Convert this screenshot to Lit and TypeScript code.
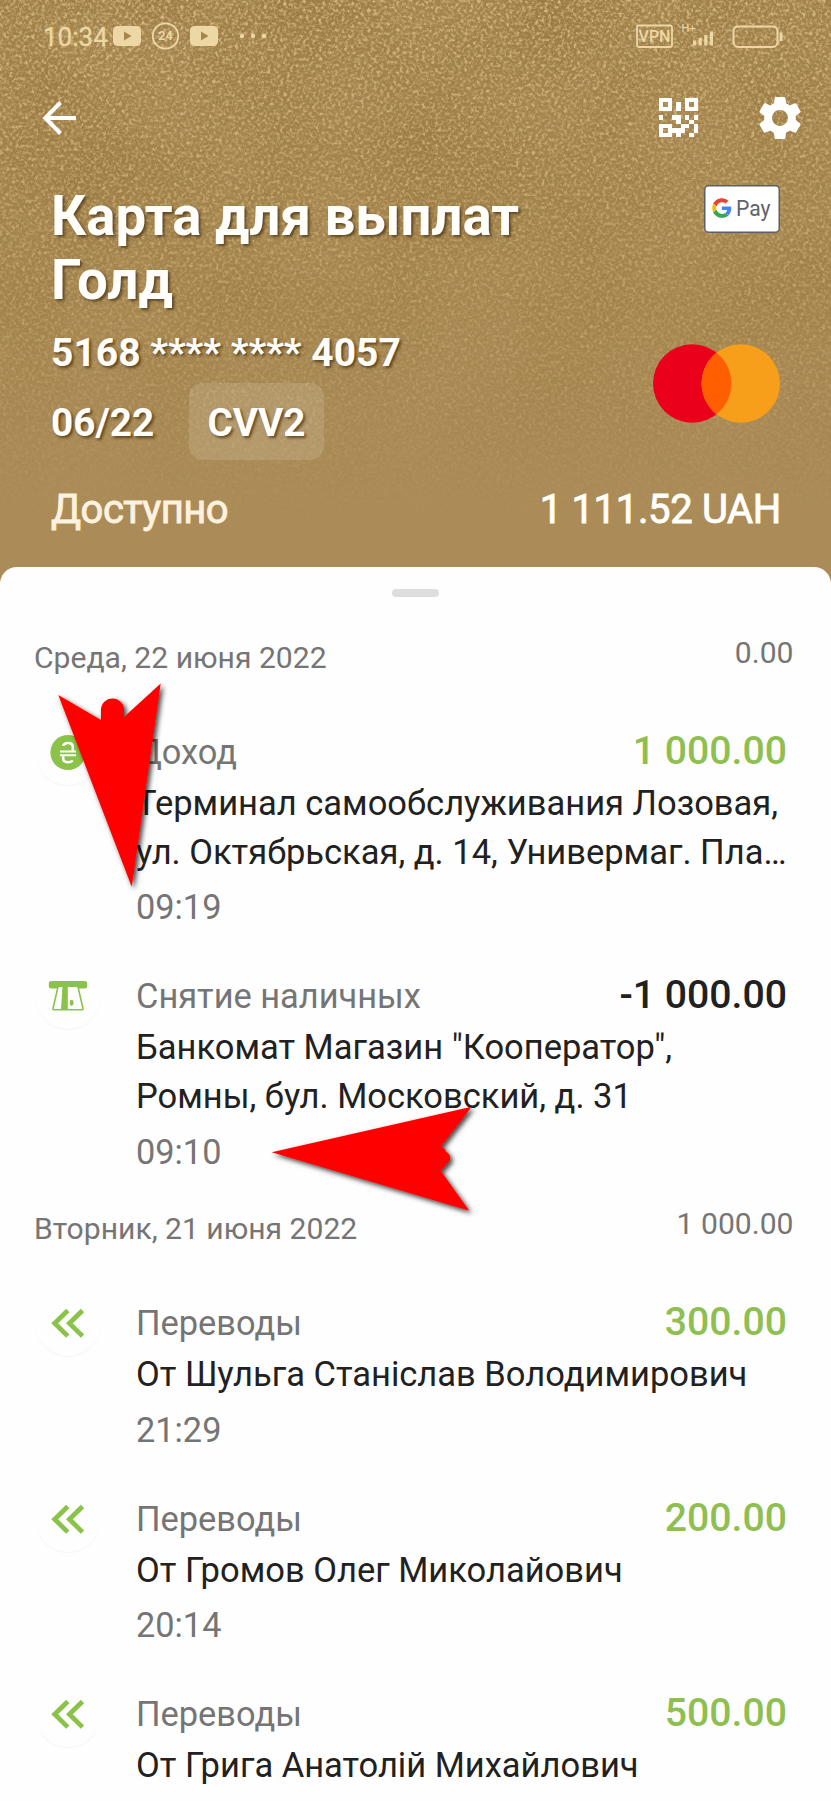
import { LitElement, html, css, svg } from "lit";
import { customElement, property } from "lit/decorators.js";

type Tx = { icon: string; title: string; amount: string; tone: string; lines: string[]; time?: string };
type Day = { date: string; sum: string; items: Tx[] };

const DAYS: Day[] = [
  {
    date: "Среда, 22 июня 2022",
    sum: "0.00",
    items: [
      { icon: "income", title: "Доход", amount: "1 000.00", tone: "plus", lines: ["Терминал самообслуживания Лозовая,", "ул. Октябрьская, д. 14, Универмаг. Пла…"], time: "09:19" },
      { icon: "cash", title: "Снятие наличных", amount: "-1 000.00", tone: "minus", lines: ['Банкомат Магазин "Кооператор",', "Ромны, бул. Московский, д. 31"], time: "09:10" },
    ],
  },
  {
    date: "Вторник, 21 июня 2022",
    sum: "1 000.00",
    items: [
      { icon: "transfer", title: "Переводы", amount: "300.00", tone: "plus", lines: ["От Шульга Станіслав Володимирович"], time: "21:29" },
      { icon: "transfer", title: "Переводы", amount: "200.00", tone: "plus", lines: ["От Громов Олег Миколайович"], time: "20:14" },
      { icon: "transfer", title: "Переводы", amount: "500.00", tone: "plus", lines: ["От Грига Анатолій Михайлович"] },
    ],
  },
];

const ICONS: Record<string, unknown> = {
  income: svg`
    <circle cx="32" cy="31.500" r="17.600" fill="#8bc34a"/>
    <g fill="none" stroke="#fff" stroke-width="2.500" transform="translate(0 1)">
      <path d="M27 23.800q1.200-2.800 5-2.800 4.800 0 4.800 4.200v4M27.200 33v3.300q0 3.900 4.600 3.900 3.700 0 5-1.700"/>
      <path d="M24 29.500h16M24 33.200h16" stroke-width="2"/>
    </g>`,
  cash: svg`
    <rect x="12.800" y="16" width="38.400" height="7.600" rx="2.500" fill="#8bc34a"/>
    <path d="M22.200 21h19.600L47 43.500q.3 1.200-1 1.200H18q-1.300 0-1-1.200z" fill="#fff" stroke="#8bc34a" stroke-width="1.600"/>
    <path d="M26.600 20h5.200v25H25z" fill="#8bc34a"/>
    <path d="M20 20h22v2H20z" fill="#8bc34a"/>
    <ellipse cx="35.600" cy="37.800" rx="1.900" ry="3" fill="#8bc34a"/>`,
  transfer: svg`<path d="M31.800 18.500 18.700 31.300l13.100 12.800M46.500 18.500 33.400 31.300l13.100 12.800" fill="none" stroke="#8bc34a" stroke-width="4.800"/>`,
};

@customElement("tx-row")
class TxRow extends LitElement {
  @property({ attribute: false }) tx!: Tx;
  static styles = css`
    :host { display: grid; grid-template-columns: 64px 1fr; column-gap: 36px; padding: 0 44px 0 36px; }
    .badge { width: 64px; height: 64px; margin-top: 2px; border-radius: 50%; background: #fefefe; box-shadow: 0 1.500px 1px rgba(0, 0, 0, 0.03); }
    .badge svg { display: block; }
    .head { display: flex; justify-content: space-between; align-items: baseline; height: 60px; line-height: 64px; white-space: nowrap; }
    .title { color: #757575; font-size: 34.400px; }
    .amount { font-size: 39.200px; font-weight: 500; }
    .plus { color: #8fbf50; }
    .minus { color: #212121; }
    .line { color: #212121; font-size: 34.500px; line-height: 48.700px; white-space: nowrap; }
    .time { color: #757575; font-size: 34.300px; line-height: 62px; height: 87px; }
  `;
  render() {
    const t = this.tx;
    return html`
      <div class="badge"><svg width="64" height="64" viewBox="0 0 64 64">${ICONS[t.icon]}</svg></div>
      <div>
        <div class="head"><span class="title">${t.title}</span><span class="amount ${t.tone}">${t.amount}</span></div>
        ${t.lines.map((l) => html`<div class="line">${l}</div>`)}
        ${t.time ? html`<div class="time">${t.time}</div>` : null}
      </div>`;
  }
}

const QR = [
  "111000111",
  "101010101",
  "111010111",
  "000000000",
  "100110101",
  "000010010",
  "111001101",
  "101111001",
  "111010010",
];

@customElement("app-root")
class AppRoot extends LitElement {
  static styles = css`
    :host { display: block; position: relative; width: 831px; height: 1801px; overflow: hidden; background: #ab8c58; font-family: Roboto, "Noto Sans", sans-serif; }
    .grain { position: absolute; left: 0; top: 0; }
    .hero { position: relative; height: 567px; color: #fffefa; box-sizing: border-box; }
    .status { display: flex; align-items: center; height: 72px; padding: 0 48px 0 43px; box-sizing: border-box; justify-content: space-between; color: #edd7a5; }
    .clock { display: flex; align-items: center; font-size: 26px; -webkit-text-stroke: 0.300px #edd7a5; }
    .clock span { width: 66.500px; padding-top: 2px; }
    .clock svg, .net svg { display: block; }
    .bar { display: flex; align-items: center; height: 91px; padding: 0 29px 0 42px; }
    .bar .back { margin-right: auto; }
    .bar .qr { margin-right: 60px; }
    .bar svg { display: block; }
    .card { display: flex; justify-content: space-between; padding: 21px 51px 0 51px; }
    .name { font-size: 54.600px; line-height: 64px; font-weight: 700; margin: 0; text-shadow: 2px 2px 3px rgba(60, 40, 10, 0.7); }
    .number { font-size: 39px; line-height: 46px; font-weight: 700; text-shadow: 2px 2px 3px rgba(60, 40, 10, 0.7); margin-top: 18px; }
    .row { display: flex; align-items: center; margin-top: 7px; font-size: 38.700px; font-weight: 700; text-shadow: 2px 2px 3px rgba(60, 40, 10, 0.7); }
    .row > span:first-child { width: 104px; padding-top: 2px; }
    .cvv { margin-left: 34px; width: 135px; height: 77px; line-height: 80px; text-align: center; background: rgba(255, 255, 255, 0.13); border-radius: 14px; }
    .right { display: flex; flex-direction: column; align-items: flex-end; padding-top: 1px; }
    .right svg { display: block; }
    .mc { margin-top: 111px; }
    .funds { display: flex; justify-content: space-between; padding: 26px 50px 0 51px; font-size: 40px; line-height: 48px; letter-spacing: -0.350px; -webkit-text-stroke: 0.900px currentColor; }
    .soft { color: #fdf1df; letter-spacing: -0.500px; }
    .sheet { position: relative; height: 1234px; background: #fefefe; border-radius: 17px 17px 0 0; overflow: hidden; }
    .handle { width: 47px; height: 8px; border-radius: 4px; background: #dedede; margin: 22px auto 0; }
    .day { display: flex; justify-content: space-between; align-items: flex-start; margin-top: -2px; padding: 0 37.500px 0 34px; color: #757575; font-size: 30.100px; line-height: 36px; height: 84px; }
    .date { padding-top: 5px; }
    .first { margin-top: 38px; }
    .marks { position: absolute; left: 0; top: 0; }
  `;

  grain() {
    return html`<svg class="grain" width="831" height="590" viewBox="0 0 831 590">
      <defs>
        <filter id="light" x="0" y="0" width="100%" height="100%" color-interpolation-filters="sRGB">
          <feTurbulence type="fractalNoise" baseFrequency="0.31" numOctaves="4" seed="21"/>
          <feColorMatrix values="0 0 0 0 0.86  0 0 0 0 0.74  0 0 0 0 0.53  1.9 1.9 0 0 -1.72"/>
        </filter>
        <filter id="dark" x="0" y="0" width="100%" height="100%" color-interpolation-filters="sRGB">
          <feTurbulence type="fractalNoise" baseFrequency="0.008" numOctaves="3" seed="3"/>
          <feColorMatrix values="0 0 0 0 0.5  0 0 0 0 0.38  0 0 0 0 0.14  1.4 0 0 0 -0.55"/>
        </filter>
        <linearGradient id="fade" x1="0" y1="0" x2="0" y2="1">
          <stop offset="0" stop-color="#eee"/><stop offset=".4" stop-color="#999"/>
          <stop offset=".65" stop-color="#555"/><stop offset=".9" stop-color="#000"/>
        </linearGradient>
        <linearGradient id="base" x1="0" y1="0" x2="0" y2="1">
          <stop offset="0" stop-color="#a3844e"/><stop offset=".5" stop-color="#a58650"/><stop offset=".85" stop-color="#ab8c58"/>
        </linearGradient>
        <mask id="m"><rect width="831" height="590" fill="url(#fade)"/></mask>
      </defs>
      <rect width="831" height="590" fill="url(#base)"/>
      <g mask="url(#m)">
        <rect width="831" height="590" filter="url(#dark)" opacity=".45"/>
        <rect width="831" height="590" filter="url(#light)"/>
      </g>
    </svg>`;
  }

  status() {
    const yt = (x: number) => svg`<rect x=${x} y="6" width="28" height="20" rx="4.500" fill="#edd7a5"/><path d="M${x + 11} 11.500v9l7.500-4.500z" fill="#a5864c"/>`;
    return html`<div class="status">
      <div class="clock"><span>10:34</span>
        <svg width="160" height="32" viewBox="0 0 160 32">
          ${yt(3)}${yt(80)}
          <circle cx="55.500" cy="16" r="12.700" fill="none" stroke="#edd7a5" stroke-width="1.800"/>
          <text x="55.500" y="20.200" font-size="12.500" font-weight="700" text-anchor="middle" fill="#edd7a5">24</text>
          <g fill="#edd7a5"><circle cx="132" cy="16" r="2.200"/><circle cx="143" cy="16" r="2.200"/><circle cx="154" cy="16" r="2.200"/></g>
        </svg></div>
      <div class="net">
        <svg width="147" height="32" viewBox="0 0 147 32" fill="#edd7a5">
          <rect x="1" y="5.500" width="35" height="21.500" rx="2" fill="none" stroke="#edd7a5" stroke-width="1.800"/>
          <text x="18.500" y="22" font-size="16" text-anchor="middle" font-weight="500">VPN</text>
          <text x="45.500" y="12" font-size="11">H+</text>
          <path d="M57 20.500h3.200v5H57zM62.600 18h3.200v7.500h-3.200zM68.200 15h3.200v10.500h-3.200zM73.800 11.500H77v14h-3.200z"/>
          <rect x="97.500" y="6.500" width="44" height="20.500" rx="5" fill="none" stroke="#edd7a5" stroke-width="2"/>
          <rect x="143.500" y="12.500" width="3" height="8.500"/>
        </svg></div>
    </div>`;
  }

  render() {
    const cell = 4.28;
    return html`
      ${this.grain()}
      <div class="hero">
        ${this.status()}
        <div class="bar">
          <svg class="back" width="36" height="36" viewBox="0 0 36 36"><path d="M34 18H4M18.500 2.500 3.200 18l15.300 15.500" fill="none" stroke="#fff" stroke-width="4"/></svg>
          <svg class="qr" width="39" height="39" viewBox="0 0 38.520 38.520" fill="#fff" shape-rendering="crispEdges">
            ${QR.flatMap((r, y) => [...r].map((c, x) => (c === "1" ? svg`<rect x=${x * cell} y=${y * cell} width=${cell} height=${cell}/>` : null)))}
          </svg>
          <svg width="44" height="44" viewBox="2 2 20 20" fill="#fff"><path d="M19.140 12.940c.04-.3.06-.61.06-.94 0-.32-.02-.64-.07-.94l2.030-1.580c.18-.14.23-.41.12-.61l-1.920-3.320c-.12-.22-.37-.29-.59-.22l-2.390.96c-.5-.38-1.030-.7-1.620-.94l-.36-2.540c-.04-.24-.24-.41-.48-.41h-3.840c-.24 0-.43.17-.47.41l-.36 2.540c-.59.24-1.130.57-1.620.94l-2.390-.96c-.22-.08-.47 0-.59.22L2.740 8.870c-.12.21-.08.47.12.61l2.030 1.580c-.05.3-.09.63-.09.94s.02.64.07.94l-2.030 1.580c-.18.14-.23.41-.12.61l1.920 3.320c.12.22.37.29.59.22l2.390-.96c.5.38 1.030.7 1.620.94l.36 2.540c.05.24.24.41.48.41h3.840c.24 0 .44-.17.47-.41l.36-2.540c.59-.24 1.130-.56 1.620-.94l2.390.96c.22.08.47 0 .59-.22l1.920-3.320c.12-.22.07-.47-.12-.61l-2.010-1.580zM12 15.600c-1.980 0-3.600-1.620-3.600-3.600s1.620-3.600 3.600-3.600 3.600 1.620 3.600 3.600-1.620 3.600-3.600 3.600z"/></svg>
        </div>
        <div class="card">
          <div>
            <h1 class="name">Карта для выплат<br>Голд</h1>
            <div class="number">5168 **** **** 4057</div>
            <div class="row"><span>06/22</span><span class="cvv">CVV2</span></div>
          </div>
          <div class="right">
            <svg width="76" height="48" viewBox="0 0 76 48">
              <rect x=".75" y=".75" width="74.500" height="46.500" rx="4" fill="#fff" stroke="#5b6066" stroke-width="1.500"/>
              <g transform="translate(8.200 13.300) scale(.405)">
                <path fill="#EA4335" d="M24 9.500c3.540 0 6.710 1.220 9.210 3.600l6.850-6.850C35.900 2.380 30.470 0 24 0 14.620 0 6.510 5.380 2.560 13.220l7.980 6.190C12.430 13.720 17.740 9.500 24 9.500z"/>
                <path fill="#4285F4" d="M46.980 24.550c0-1.570-.15-3.090-.38-4.550H24v9.020h12.940c-.58 2.960-2.260 5.480-4.780 7.180l7.730 6c4.510-4.180 7.090-10.360 7.090-17.650z"/>
                <path fill="#FBBC05" d="M10.530 28.590c-.48-1.450-.76-2.990-.76-4.590s.27-3.140.76-4.590l-7.980-6.190C.92 16.460 0 20.120 0 24c0 3.880.92 7.540 2.560 10.780z"/>
                <path fill="#34A853" d="M24 48c6.480 0 11.930-2.130 15.890-5.810l-7.730-6c-2.150 1.450-4.920 2.300-8.160 2.300-6.260 0-11.570-4.220-13.470-9.910l-7.980 6.190C6.510 42.620 14.620 48 24 48z"/>
              </g>
              <text x="32" y="31" font-size="22.500" fill="#5f6368" font-family="Roboto, sans-serif" textLength="34.500" lengthAdjust="spacingAndGlyphs">Pay</text>
            </svg>
            <svg class="mc" width="127" height="79" viewBox="0 0 127 79">
              <circle cx="39.200" cy="39.500" r="39.200" fill="#eb001b"/><circle cx="87.800" cy="39.500" r="39.200" fill="#f79e1b"/>
              <path d="M63.500 8.740a39.200 39.200 0 0 1 0 61.520 39.200 39.200 0 0 1 0-61.520z" fill="#ff5f00"/>
            </svg>
          </div>
        </div>
        <div class="funds"><span class="soft">Доступно</span><span>1 111.52 UAH</span></div>
      </div>
      <div class="sheet">
        <div class="handle"></div>
        ${DAYS.map((d, i) => html`
          <div class="day ${i === 0 ? "first" : ""}"><span class="date">${d.date}</span><span>${d.sum}</span></div>
          ${d.items.map((t) => html`<tx-row .tx=${t}></tx-row>`)}`)}
      </div>
      <svg class="marks" width="831" height="1801" viewBox="0 0 831 1801">
        <defs><filter id="drop" x="-20%" y="-20%" width="140%" height="140%"><feDropShadow dx="2.500" dy="2.500" stdDeviation="2.500" flood-color="#000" flood-opacity=".75"/></filter></defs>
        <g fill="#fe0000" filter="url(#drop)">
          <path d="M58.300 695 101 720v-10a11.500 11.500 0 0 1 23 0v7l36.700-33.500-29 203.200z"/>
          <path d="m271.700 1152.300 200-45.600-31 40q4 1 5.500 5.300 4 2 4 6t-4 6q-1.500 4-6 6l29.100 40.700z"/>
        </g>
      </svg>`;
  }
}
